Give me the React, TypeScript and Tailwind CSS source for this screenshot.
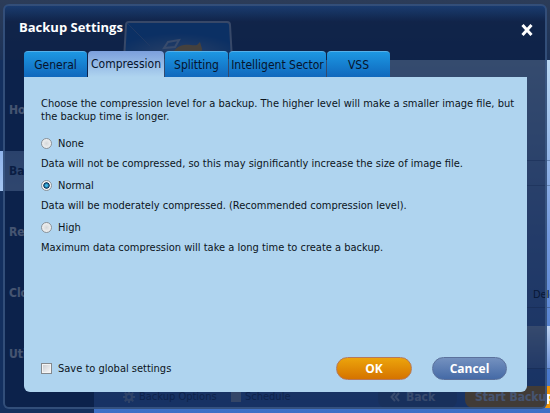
import { useState } from 'react'

type Level = 'none' | 'normal' | 'high'

const LEVELS: { value: Level; label: string; desc: string }[] = [
  { value: 'none', label: 'None', desc: 'Data will not be compressed, so this may significantly increase the size of image file.' },
  { value: 'normal', label: 'Normal', desc: 'Data will be moderately compressed. (Recommended compression level).' },
  { value: 'high', label: 'High', desc: 'Maximum data compression will take a long time to create a backup.' },
]

const TABS = [
  { label: 'General', width: 'w-[63px]' },
  { label: 'Compression', width: 'w-[76px]' },
  { label: 'Splitting', width: 'w-[63px]' },
  { label: 'Intelligent Sector', width: 'w-[97px]' },
  { label: 'VSS', width: 'w-[63px]' },
]

const NAV = ['Home', 'Backup', 'Restore', 'Clone', 'Utilities']

const GearIcon = () => (
  <svg className="w-3 h-3" viewBox="0 0 24 24" fill="none" stroke="currentColor">
    <circle cx="12" cy="12" r="6" strokeWidth={4} />
    <path strokeWidth={4} d="M12 0v5M12 19v5M0 12h5M19 12h5M3.5 3.5l3.5 3.5M17 17l3.5 3.5M20.5 3.5L17 7M7 17l-3.5 3.5" />
  </svg>
)

const ProductArt = () => (
  <svg className="w-[110px] h-[39px]" viewBox="0 0 110 39">
    <defs>
      <radialGradient id="glow" cx="0.5" cy="0.9" r="0.6">
        <stop offset="0" stopColor="#9bb4d0" />
        <stop offset="1" stopColor="#1068c8" />
      </radialGradient>
    </defs>
    <path d="M1 39L3 4a3 3 0 013-3h98a3 3 0 013 3l2 35z" fill="url(#glow)" stroke="#c4ccd8" strokeWidth="2" />
    <path d="M5 3l22 22" stroke="#5f8fc9" strokeWidth="1" />
    <path d="M48 39c1-9 6-14 13-15 5-1 9 1 13 0l3-3 2 7-2 11z" fill="#ffae28" />
    <path d="M41 27l4-6 11-2-4 7z" fill="none" stroke="#c9d7e8" strokeWidth="2" />
  </svg>
)

// main window that stays visible through the dialog's dark glass
const AppWindow = () => (
  <div className="min-h-screen flex flex-col bg-[#14305f]" aria-hidden="true">
    <div className="h-[60px] flex items-end pl-[123px] bg-gradient-to-b from-[#2c3c58] to-[#1c3258]">
      <ProductArt />
    </div>
    <div className="flex-1 flex">
      <div className="w-[94px] pt-[30px] flex flex-col gap-[21px] font-bold text-xs">
        {NAV.map(item => (
          <span key={item}
            className={`h-10 pl-[9px] flex items-center ${item === 'Backup' ? 'bg-gradient-to-b from-[#8fb4ea] to-[#a5c6f2] text-[#0b1c40]' : 'text-white'}`}>
            {item}
          </span>
        ))}
      </div>
      <div className="flex-1 min-w-0 flex flex-col bg-gradient-to-b from-[#bcd9f2] via-[#7398dc] to-[#3e70c6]">
        <div className="h-[101px] border-b border-[#6484b4]" />
        <div className="h-[25px] border-b border-[#6484b4]" />
        <div className="h-[122px] flex items-end justify-end pb-1 border-b border-[#4767a0]">
          <span className="w-[17px] text-[11px] text-black">Delete</span>
        </div>
        <div className="h-[18px]" />
        <div className="h-[43px] bg-gradient-to-b from-[#c0d4f0] to-[#6d90d4] border-b border-[#4767a0]" />
        <div className="h-[17px]" />
        <div className="h-[22px] flex items-center pl-[29px] text-[11px] text-[#17305f] whitespace-nowrap">
          <span className="w-[108px] shrink-0 flex items-center gap-1">
            <span className="text-[#a5b7d8]"><GearIcon /></span>
            Backup Options
          </span>
          <span className="w-[147px] shrink-0 flex items-center gap-1">
            <span className="w-2.5 h-2.5 bg-[#b8c4d8]" />
            Schedule
          </span>
          <span className="w-[79px] h-[22px] mr-2 shrink-0 flex items-center gap-1.5 pl-3 rounded-lg bg-[#4568a8] text-[#c9d8f2] text-xs font-bold">
            <svg className="w-2.5 h-2.5" viewBox="0 0 10 10" fill="none" stroke="currentColor" strokeWidth={2}>
              <path d="M5 1L1.5 5L5 9M9 1L5.5 5L9 9" />
            </svg>
            Back
          </span>
          <span className="h-[22px] shrink-0 flex items-center px-2.5 rounded-lg bg-[#ee950a] text-white text-xs font-bold">
            Start Backup
          </span>
        </div>
      </div>
    </div>
  </div>
)

const App = () => {
  const [tab, setTab] = useState('Compression')
  const [level, setLevel] = useState<Level>('normal')
  const [saveGlobal, setSaveGlobal] = useState(false)

  return (
    <div className="relative min-h-screen overflow-hidden font-['DejaVu_Sans_Condensed','DejaVu_Sans',sans-serif]">
      <AppWindow />

      <div role="dialog" aria-labelledby="dialog-title"
        className="absolute inset-x-[3px] top-1 bottom-1 flex flex-col pl-[19px] pr-[18px] pb-[15px] rounded-md border-2 border-[#3c5a86]/80 bg-[#0b1e44]/76">
        <div className="h-[45px] -ml-[19px] -mr-[18px] pl-3.5 pr-3 flex items-start justify-between pt-3 bg-gradient-to-b from-[#1f4a88]/60 to-transparent to-35%">
          <h1 id="dialog-title" className="text-[13px] leading-[18px] font-bold text-white font-['Open_Sans',sans-serif]">Backup Settings</h1>
          <button aria-label="Close" className="mt-1.5 w-3 h-3 text-white">
            <svg className="w-3 h-3" viewBox="0 0 12 12" fill="none" stroke="currentColor" strokeWidth={3}>
              <path d="M1.500 1L10.500 11M10.500 1L1.500 11" />
            </svg>
          </button>
        </div>

        <div role="tablist" className="flex gap-px h-[26px]">
          {TABS.map(t => (
            <button key={t.label} role="tab" aria-selected={tab === t.label} onClick={() => setTab(t.label)}
              className={`${t.width} h-[26px] shrink-0 rounded-t-sm text-xs text-[#06142c] whitespace-nowrap ${
                tab === t.label
                  ? 'bg-gradient-to-b from-[#7c9fdc] to-[#afd4ef]'
                  : 'bg-gradient-to-b from-[#1d97e2] to-[#1168bd] border-t border-[#55b0ea]'
              }`}>
              {t.label}
            </button>
          ))}
        </div>

        <div role="tabpanel" className="flex-1 flex flex-col pl-[17px] pr-3 pt-5 pb-3 rounded-b-md bg-[#afd4ef] text-[11px] leading-[13px] text-[#0c141c]">
          <p>Choose the compression level for a backup. The higher level will make a smaller image file, but the backup time is longer.</p>

          <div role="radiogroup" className="mt-[13px] flex flex-col gap-2">
            {LEVELS.map(l => (
              <div key={l.value} className="flex flex-col gap-1.5">
                <label className="flex items-center gap-1.5 h-[15px]">
                  <input type="radio" name="level" value={l.value} checked={level === l.value} onChange={() => setLevel(l.value)}
                    className="appearance-none w-[11px] h-[11px] rounded-full border border-[#8b9298] bg-radial from-[#d5d8da] to-[#fafafa] checked:bg-radial checked:from-[#3fb8e8] checked:from-15% checked:via-[#0d3658] checked:via-45% checked:to-[#f4f4f4] checked:to-55%" />
                  {l.label}
                </label>
                <p>{l.desc}</p>
              </div>
            ))}
          </div>

          <div className="mt-auto flex items-center">
            <label className="flex items-center gap-1.5 mr-auto">
              <input type="checkbox" checked={saveGlobal} onChange={e => setSaveGlobal(e.target.checked)}
                className="appearance-none w-[11px] h-[11px] border border-[#84898e] bg-gradient-to-br from-[#c8cbd0] to-[#fafafa] shadow-[inset_0_0_0_1px_#f4f4f4] checked:to-[#0d3658]" />
              Save to global settings
            </label>
            <button className="w-[76px] h-[23px] mr-5 rounded-full border border-[#b5785c] bg-gradient-to-b from-[#eca40c] to-[#d57300] text-white text-xs font-bold font-['Open_Sans',sans-serif]">
              OK
            </button>
            <button className="w-[75px] h-[23px] mr-2 rounded-full border border-[#5b719c] bg-gradient-to-b from-[#7491bf] to-[#456aa6] text-white text-xs font-bold font-['Open_Sans',sans-serif]">
              Cancel
            </button>
          </div>
        </div>
      </div>
    </div>
  )
}

export default App
